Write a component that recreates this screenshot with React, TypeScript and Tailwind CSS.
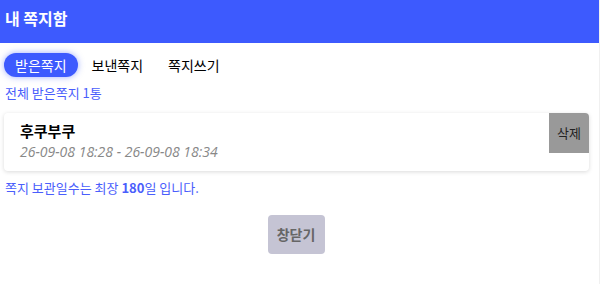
import React from "react";

export default function App() {
  const font = { fontFamily: '"Noto Sans CJK KR", "Noto Sans", sans-serif' };
  return (
    <div className="w-[600px] h-[284px] bg-white border-r border-[#f0f0f0]" style={font}>
      <div className="h-[43px] bg-[#3d5afe] pl-[5px] pt-[6px]">
        <span className="text-white font-bold text-[16px] leading-[24px]">내 쪽지함</span>
      </div>
      <div className="px-[4px]">
        <div className="flex items-center mt-[10px] gap-[2px]">
          <div className="h-[24px] px-[11px] rounded-full bg-[#3d5afe] text-white text-[14px] leading-[24px] shadow-[0_0_6px_rgba(61,90,254,0.5)]">
            받은쪽지
          </div>
          <div className="h-[24px] px-[11px] text-black text-[14px] leading-[24px] ml-[1px]">보낸쪽지</div>
          <div className="h-[24px] px-[11px] text-black text-[14px] leading-[24px] ml-[1px]">쪽지쓰기</div>
        </div>
        <div className="mt-[7px] pl-[1px] text-[13px] leading-[18px] text-[#4a5efc]">전체 받은쪽지 1통</div>
        <div className="mt-[11px] w-[585px] h-[58px] bg-white rounded-[4px] shadow-[0_1px_4px_rgba(0,0,0,0.15)] flex justify-between">
          <div className="pl-[16px] pt-[8px]">
            <div className="text-[15px] font-bold leading-[20px] text-black">후쿠부쿠</div>
            <div className="mt-[1px] text-[14px] italic font-normal leading-[20px] text-[#888]" style={{ fontFamily: '"Open Sans", "Noto Sans", sans-serif' }}>
              26-09-08 18:28 - 26-09-08 18:34
            </div>
          </div>
          <div className="w-[40px] h-[40px] bg-[#999] rounded-tr-[4px] flex items-center justify-center text-[13px] text-[#222]">
            삭제
          </div>
        </div>
        <div className="mt-[8px] pl-[1px] text-[13px] leading-[18px] text-[#4a5efc]">
          쪽지 보관일수는 최장 <b>180</b>일 입니다.
        </div>
        <div className="flex justify-center mt-[18px] pr-[7px]">
          <div className="w-[57px] h-[39px] rounded-[4px] bg-[#c5c4d4] flex items-center justify-center text-[14px] font-bold text-[#666]">
            창닫기
          </div>
        </div>
      </div>
    </div>
  );
}
